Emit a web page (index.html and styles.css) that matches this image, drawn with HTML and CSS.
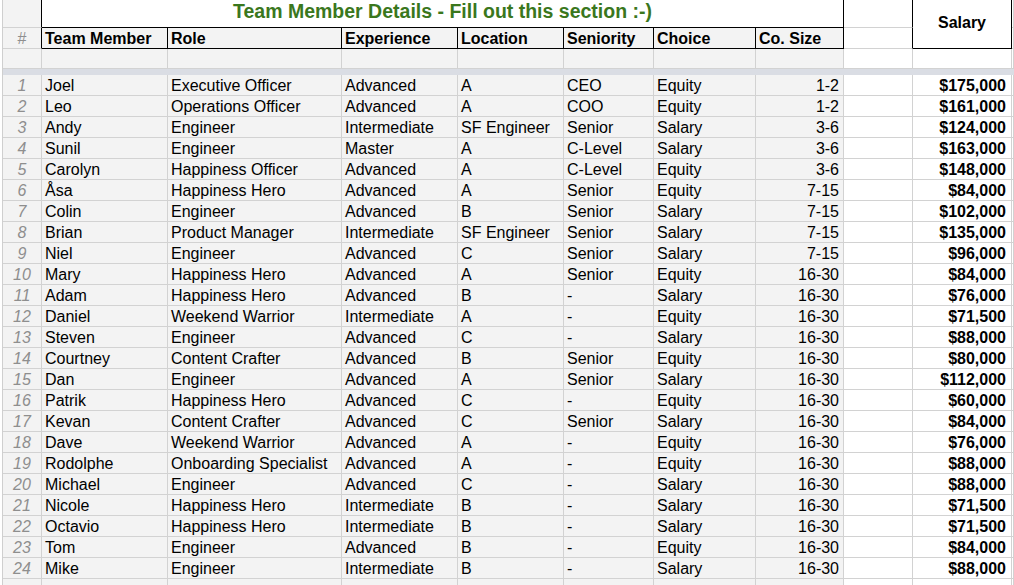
FILE: index.html
```html
<!DOCTYPE html>
<html lang="en">
<head>
<meta charset="utf-8">
<title>Team Member Details</title>
<link rel="stylesheet" href="styles.css">
</head>
<body>
<div class="sheet">
  <div class="n bk"></div><div class="title">Team Member Details - Fill out this section :-)</div><div class="w bk"></div><div class="sal">Salary</div><div class="w"></div>
  <div class="n bk hn">#</div><div class="h">Team Member</div><div class="h">Role</div><div class="h">Experience</div><div class="h">Location</div><div class="h">Seniority</div><div class="h">Choice</div><div class="h">Co. Size</div><div class="w bk"></div><div class="w"></div>
  <div class="n"></div><div class="d"></div><div class="d"></div><div class="d"></div><div class="d"></div><div class="d"></div><div class="d"></div><div class="d"></div><div class="w"></div><div class="w"></div><div class="w"></div>
  <div class="band"></div>

  <div class="n">1</div><div class="d">Joel</div><div class="d">Executive Officer</div><div class="d">Advanced</div><div class="d">A</div><div class="d">CEO</div><div class="d">Equity</div><div class="d r">1-2</div><div class="w"></div><div class="w s">$175,000</div><div class="w"></div>
  <div class="n">2</div><div class="d">Leo</div><div class="d">Operations Officer</div><div class="d">Advanced</div><div class="d">A</div><div class="d">COO</div><div class="d">Equity</div><div class="d r">1-2</div><div class="w"></div><div class="w s">$161,000</div><div class="w"></div>
  <div class="n">3</div><div class="d">Andy</div><div class="d">Engineer</div><div class="d">Intermediate</div><div class="d">SF Engineer</div><div class="d">Senior</div><div class="d">Salary</div><div class="d r">3-6</div><div class="w"></div><div class="w s">$124,000</div><div class="w"></div>
  <div class="n">4</div><div class="d">Sunil</div><div class="d">Engineer</div><div class="d">Master</div><div class="d">A</div><div class="d">C-Level</div><div class="d">Salary</div><div class="d r">3-6</div><div class="w"></div><div class="w s">$163,000</div><div class="w"></div>
  <div class="n">5</div><div class="d">Carolyn</div><div class="d">Happiness Officer</div><div class="d">Advanced</div><div class="d">A</div><div class="d">C-Level</div><div class="d">Equity</div><div class="d r">3-6</div><div class="w"></div><div class="w s">$148,000</div><div class="w"></div>
  <div class="n">6</div><div class="d">Åsa</div><div class="d">Happiness Hero</div><div class="d">Advanced</div><div class="d">A</div><div class="d">Senior</div><div class="d">Equity</div><div class="d r">7-15</div><div class="w"></div><div class="w s">$84,000</div><div class="w"></div>
  <div class="n">7</div><div class="d">Colin</div><div class="d">Engineer</div><div class="d">Advanced</div><div class="d">B</div><div class="d">Senior</div><div class="d">Salary</div><div class="d r">7-15</div><div class="w"></div><div class="w s">$102,000</div><div class="w"></div>
  <div class="n">8</div><div class="d">Brian</div><div class="d">Product Manager</div><div class="d">Intermediate</div><div class="d">SF Engineer</div><div class="d">Senior</div><div class="d">Salary</div><div class="d r">7-15</div><div class="w"></div><div class="w s">$135,000</div><div class="w"></div>
  <div class="n">9</div><div class="d">Niel</div><div class="d">Engineer</div><div class="d">Advanced</div><div class="d">C</div><div class="d">Senior</div><div class="d">Salary</div><div class="d r">7-15</div><div class="w"></div><div class="w s">$96,000</div><div class="w"></div>
  <div class="n">10</div><div class="d">Mary</div><div class="d">Happiness Hero</div><div class="d">Advanced</div><div class="d">A</div><div class="d">Senior</div><div class="d">Equity</div><div class="d r">16-30</div><div class="w"></div><div class="w s">$84,000</div><div class="w"></div>
  <div class="n">11</div><div class="d">Adam</div><div class="d">Happiness Hero</div><div class="d">Advanced</div><div class="d">B</div><div class="d">-</div><div class="d">Salary</div><div class="d r">16-30</div><div class="w"></div><div class="w s">$76,000</div><div class="w"></div>
  <div class="n">12</div><div class="d">Daniel</div><div class="d">Weekend Warrior</div><div class="d">Intermediate</div><div class="d">A</div><div class="d">-</div><div class="d">Equity</div><div class="d r">16-30</div><div class="w"></div><div class="w s">$71,500</div><div class="w"></div>
  <div class="n">13</div><div class="d">Steven</div><div class="d">Engineer</div><div class="d">Advanced</div><div class="d">C</div><div class="d">-</div><div class="d">Salary</div><div class="d r">16-30</div><div class="w"></div><div class="w s">$88,000</div><div class="w"></div>
  <div class="n">14</div><div class="d">Courtney</div><div class="d">Content Crafter</div><div class="d">Advanced</div><div class="d">B</div><div class="d">Senior</div><div class="d">Equity</div><div class="d r">16-30</div><div class="w"></div><div class="w s">$80,000</div><div class="w"></div>
  <div class="n">15</div><div class="d">Dan</div><div class="d">Engineer</div><div class="d">Advanced</div><div class="d">A</div><div class="d">Senior</div><div class="d">Salary</div><div class="d r">16-30</div><div class="w"></div><div class="w s">$112,000</div><div class="w"></div>
  <div class="n">16</div><div class="d">Patrik</div><div class="d">Happiness Hero</div><div class="d">Advanced</div><div class="d">C</div><div class="d">-</div><div class="d">Equity</div><div class="d r">16-30</div><div class="w"></div><div class="w s">$60,000</div><div class="w"></div>
  <div class="n">17</div><div class="d">Kevan</div><div class="d">Content Crafter</div><div class="d">Advanced</div><div class="d">C</div><div class="d">Senior</div><div class="d">Salary</div><div class="d r">16-30</div><div class="w"></div><div class="w s">$84,000</div><div class="w"></div>
  <div class="n">18</div><div class="d">Dave</div><div class="d">Weekend Warrior</div><div class="d">Advanced</div><div class="d">A</div><div class="d">-</div><div class="d">Equity</div><div class="d r">16-30</div><div class="w"></div><div class="w s">$76,000</div><div class="w"></div>
  <div class="n">19</div><div class="d">Rodolphe</div><div class="d">Onboarding Specialist</div><div class="d">Advanced</div><div class="d">A</div><div class="d">-</div><div class="d">Equity</div><div class="d r">16-30</div><div class="w"></div><div class="w s">$88,000</div><div class="w"></div>
  <div class="n">20</div><div class="d">Michael</div><div class="d">Engineer</div><div class="d">Advanced</div><div class="d">C</div><div class="d">-</div><div class="d">Salary</div><div class="d r">16-30</div><div class="w"></div><div class="w s">$88,000</div><div class="w"></div>
  <div class="n">21</div><div class="d">Nicole</div><div class="d">Happiness Hero</div><div class="d">Intermediate</div><div class="d">B</div><div class="d">-</div><div class="d">Salary</div><div class="d r">16-30</div><div class="w"></div><div class="w s">$71,500</div><div class="w"></div>
  <div class="n">22</div><div class="d">Octavio</div><div class="d">Happiness Hero</div><div class="d">Intermediate</div><div class="d">B</div><div class="d">-</div><div class="d">Salary</div><div class="d r">16-30</div><div class="w"></div><div class="w s">$71,500</div><div class="w"></div>
  <div class="n">23</div><div class="d">Tom</div><div class="d">Engineer</div><div class="d">Advanced</div><div class="d">B</div><div class="d">-</div><div class="d">Equity</div><div class="d r">16-30</div><div class="w"></div><div class="w s">$84,000</div><div class="w"></div>
  <div class="n">24</div><div class="d">Mike</div><div class="d">Engineer</div><div class="d">Intermediate</div><div class="d">B</div><div class="d">-</div><div class="d">Salary</div><div class="d r">16-30</div><div class="w"></div><div class="w s">$88,000</div><div class="w"></div>
  <div class="n"></div><div class="d"></div><div class="d"></div><div class="d"></div><div class="d"></div><div class="d"></div><div class="d"></div><div class="d"></div><div class="w"></div><div class="w"></div><div class="w"></div>
</div>
</body>
</html>
```

FILE: styles.css
```css
html, body {
  margin: 0;
  padding: 0;
  background: #ffffff;
  overflow: hidden;
}

body {
  font-family: "Liberation Sans", Arial, Helvetica, sans-serif;
  font-size: 16px;
  color: #000000;
}

.sheet {
  display: grid;
  grid-template-columns: 39px 126px 174px 116px 106px 90px 102px 88px 69px 99px 2px;
  grid-template-rows: 28px 21px 20px 6px;
  grid-auto-rows: 21px;
  margin-left: 2px;
  border-left: 1px solid #cfcfcf;
}

.sheet > div {
  box-sizing: border-box;
  border-right: 1px solid #d2d2d2;
  border-bottom: 1px solid #d2d2d2;
  line-height: 20px;
  white-space: nowrap;
  overflow: hidden;
  padding: 1px 3px 0;
}

.sheet > .n {
  background: #f3f3f3;
  color: #8e8e8e;
  font-style: italic;
  text-align: center;
  padding: 1px 0 0;
}

.sheet > .hn {
  font-style: normal;
}

.sheet > .d {
  background: #f3f3f3;
}

.sheet > .r {
  text-align: right;
  padding-right: 4px;
}

.sheet > .w {
  background: #ffffff;
  padding: 1px 0 0;
}

.sheet > .s {
  font-weight: bold;
  text-align: right;
  padding-right: 5px;
}

.sheet > .h {
  background: #f3f3f3;
  font-weight: bold;
  border-right-color: #000000;
  border-bottom-color: #000000;
}

.sheet > .bk {
  border-right-color: #000000;
}

.sheet > .title {
  grid-column: span 7;
  background: #ffffff;
  color: #3a771d;
  font-weight: bold;
  font-size: 19.5px;
  line-height: 22px;
  padding-top: 0;
  text-align: center;
  border-right-color: #000000;
  border-bottom-color: #000000;
}

.sheet > .sal {
  grid-row: span 2;
  background: #ffffff;
  font-weight: bold;
  display: flex;
  align-items: center;
  justify-content: center;
  padding: 0 0 2px;
  border-right-color: #000000;
  border-bottom-color: #000000;
}

.sheet > .band {
  grid-column: 1 / -1;
  background: #dadde4;
  border: 0;
  padding: 0;
}
```
